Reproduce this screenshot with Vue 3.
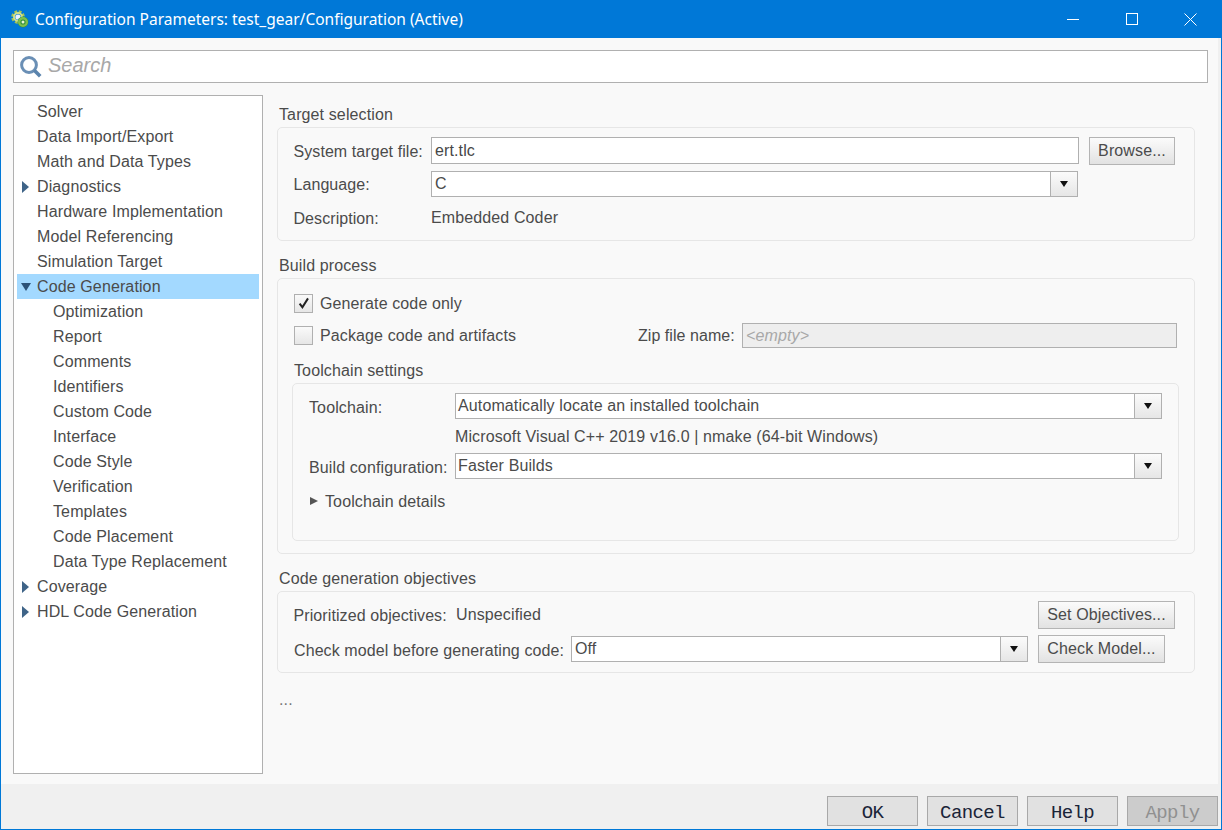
<script setup>
const tree = [
  { t: 'Solver', lvl: 0 },
  { t: 'Data Import/Export', lvl: 0 },
  { t: 'Math and Data Types', lvl: 0 },
  { t: 'Diagnostics', lvl: 0, arrow: 'right' },
  { t: 'Hardware Implementation', lvl: 0 },
  { t: 'Model Referencing', lvl: 0 },
  { t: 'Simulation Target', lvl: 0 },
  { t: 'Code Generation', lvl: 0, arrow: 'down', sel: true },
  { t: 'Optimization', lvl: 1 },
  { t: 'Report', lvl: 1 },
  { t: 'Comments', lvl: 1 },
  { t: 'Identifiers', lvl: 1 },
  { t: 'Custom Code', lvl: 1 },
  { t: 'Interface', lvl: 1 },
  { t: 'Code Style', lvl: 1 },
  { t: 'Verification', lvl: 1 },
  { t: 'Templates', lvl: 1 },
  { t: 'Code Placement', lvl: 1 },
  { t: 'Data Type Replacement', lvl: 1 },
  { t: 'Coverage', lvl: 0, arrow: 'right' },
  { t: 'HDL Code Generation', lvl: 0, arrow: 'right' },
]
</script>

<template>
  <div class="window">
    <header class="titlebar">
      <svg class="appicon" width="18" height="18" viewBox="0 0 18 18">
        <circle cx="7" cy="7" r="5.2" fill="none" stroke="#a5c455" stroke-width="3.2" stroke-dasharray="2.6 1.5"/>
        <circle cx="7" cy="7" r="4" fill="none" stroke="#cfe08e" stroke-width="2"/>
        <circle cx="7" cy="7" r="2.6" fill="#eaf2ff"/>
        <circle cx="12" cy="12" r="5.4" fill="#2f8f3a"/>
        <circle cx="12" cy="12" r="3.8" fill="none" stroke="#7ec04e" stroke-width="2.4"/>
        <circle cx="12" cy="12" r="1.5" fill="#e8f4d8"/>
      </svg>
      <span class="title">Configuration Parameters: test_gear/Configuration (Active)</span>
      <div class="winctl">
        <svg width="13" height="13" viewBox="0 0 13 13"><path d="M0 6.5h12" stroke="#fff" fill="none"/></svg>
        <svg width="13" height="13" viewBox="0 0 13 13"><rect x="0.5" y="0.5" width="11" height="11" stroke="#fff" fill="none"/></svg>
        <svg width="13" height="13" viewBox="0 0 13 13"><path d="M0.5 0.5l12 12M12.5 0.5l-12 12" stroke="#fff" fill="none"/></svg>
      </div>
    </header>

    <main class="main">
      <div class="search">
        <svg width="24" height="24" viewBox="0 0 24 24">
          <circle cx="10" cy="10" r="7.4" fill="none" stroke="#6a8fb5" stroke-width="3"/>
          <path d="M15.2 15.2l6 6" stroke="#5b84ad" stroke-width="3.6" fill="none"/>
        </svg>
        <span class="search-text">Search</span>
      </div>

      <div class="content">
        <nav class="tree">
          <div v-for="n in tree" :key="n.t" class="row" :class="{ sel: n.sel, sub: n.lvl === 1 }">
            <span class="twist">
              <i v-if="n.arrow === 'right'" class="tri-r"></i>
              <i v-if="n.arrow === 'down'" class="tri-d"></i>
            </span>
            <span>{{ n.t }}</span>
          </div>
        </nav>

        <section class="panel">
          <h3 class="sect">Target selection</h3>
          <div class="box b1">
            <div class="line l1">
              <label class="lab w1 down1">System target file:</label>
              <div class="field f-target">ert.tlc</div>
              <button class="btn browse">Browse...</button>
            </div>
            <div class="line l2">
              <label class="lab w1 down1">Language:</label>
              <div class="combo c-lang"><span class="cv">C</span><span class="carrow"><i></i></span></div>
            </div>
            <div class="line l3">
              <label class="lab w1 down1">Description:</label>
              <span class="lab">Embedded Coder</span>
            </div>
          </div>

          <h3 class="sect gap">Build process</h3>
          <div class="box b2">
            <div class="check-line">
              <span class="cb">
                <svg width="14" height="14" viewBox="0 0 14 14"><path d="M2.6 7.6l2.8 3.6L11 2.4" fill="none" stroke="#222" stroke-width="2"/></svg>
              </span>
              <span class="down1">Generate code only</span>
            </div>
            <div class="check-line second">
              <span class="cb"></span>
              <span class="pkg down1">Package code and artifacts</span>
              <span class="zip down1">Zip file name:</span>
              <div class="field disabled">&lt;empty&gt;</div>
            </div>
            <div class="inner-title">Toolchain settings</div>
            <div class="inner">
              <div class="line it1">
                <label class="lab w2 down2">Toolchain:</label>
                <div class="combo c-tool"><span class="cv tight">Automatically locate an installed toolchain</span><span class="carrow"><i></i></span></div>
              </div>
              <div class="note">Microsoft Visual C++ 2019 v16.0 | nmake (64-bit Windows)</div>
              <div class="line it2">
                <label class="lab w2 down2">Build configuration:</label>
                <div class="combo c-tool"><span class="cv tight">Faster Builds</span><span class="carrow"><i></i></span></div>
              </div>
              <div class="details"><i class="tri-g"></i><span class="down1">Toolchain details</span></div>
            </div>
          </div>

          <h3 class="sect gap">Code generation objectives</h3>
          <div class="box b3">
            <div class="line o1">
              <label class="lab prio down1">Prioritized objectives:</label>
              <span class="lab unspec">Unspecified</span>
              <button class="btn setobj">Set Objectives...</button>
            </div>
            <div class="line o2">
              <label class="lab chk down2">Check model before generating code:</label>
              <div class="combo c-off"><span class="cv">Off</span><span class="carrow"><i></i></span></div>
              <button class="btn chkmodel">Check Model...</button>
            </div>
          </div>
          <div class="dots">...</div>
        </section>
      </div>
    </main>

    <footer class="footer">
      <button class="fbtn">OK</button>
      <button class="fbtn">Cancel</button>
      <button class="fbtn">Help</button>
      <button class="fbtn off">Apply</button>
    </footer>
  </div>
</template>

<style>
html, body { margin: 0; padding: 0; }
</style>

<style scoped>
.window {
  width: 1222px; height: 830px; box-sizing: border-box;
  border: 1px solid #0078d7; border-top: 0;
  display: flex; flex-direction: column;
  background: #f0f0f0;
  font-family: "Liberation Sans", Arial, sans-serif;
  font-size: 16px; letter-spacing: 0.12px; color: #4b4b4b; overflow: hidden;
}
.titlebar {
  height: 38px; flex: none; background: #0078d7; color: #fff;
  display: flex; align-items: center; padding-left: 11px; margin: 0 -1px 0 -1px;
  letter-spacing: 0;
}
.appicon { margin-right: 6px; }
.title { font-family: "Noto Sans", sans-serif; font-size: 15.5px; white-space: nowrap; }
.winctl { margin-left: auto; display: flex; gap: 45.5px; padding-right: 25px; align-items: center; }

.main {
  flex: 1; min-height: 0; background: #f9f9f9; margin-right: 3px;
  padding: 12px 10px 0 12px;
}
.search {
  height: 33px; box-sizing: border-box; border: 1px solid #b0b0b0; background: #fff;
  display: flex; align-items: center; padding-left: 5px;
  font-style: italic; font-size: 20px; color: #a8a8a8; letter-spacing: 0;
}
.search svg { margin-right: 5px; }
.search-text { position: relative; top: -1px; }

.content { display: flex; margin-top: 12px; }
.tree {
  width: 250px; height: 679px; box-sizing: border-box; flex: none;
  border: 1px solid #b0b0b0; background: #fff; padding: 3px 3px 0 3px;
}
.row { height: 25px; display: flex; align-items: center; white-space: nowrap; width: 242px; }
.row.sel { background: #a3d9ff; }
.twist { width: 20px; flex: none; display: flex; justify-content: center; padding-right: 3px; box-sizing: border-box; }
.row.sub .twist { width: 36px; }
.tri-r { width: 0; height: 0; border-left: 7px solid #3f6488; border-top: 6px solid transparent; border-bottom: 6px solid transparent; }
.tri-d { width: 0; height: 0; border-top: 8px solid #2c5278; border-left: 5px solid transparent; border-right: 5px solid transparent; }

.panel { width: 918px; margin-left: 14px; padding-top: 9px; flex: none; }
.sect { font-size: 16px; font-weight: normal; height: 20px; line-height: 22px; margin: 0 0 3px 2px; }
.sect.gap { margin-top: 14px; }
.box { border: 1px solid #e6e6e6; border-radius: 5px; box-sizing: border-box; padding: 0 16px; }
.b1 { height: 114px; padding-top: 9px; }
.b2 { height: 276px; padding-top: 14px; }
.b3 { height: 82px; padding-top: 9px; }

.line { display: flex; align-items: center; }
.lab { white-space: nowrap; }
.down1 { padding-top: 2px; }
.down2 { padding-top: 4px; }
.w1 { width: 137.5px; flex: none; margin-left: -0.5px; letter-spacing: 0.07px; }
.l1 { height: 28px; }
.l2 { height: 26px; margin-top: 6px; }
.l3 { height: 26px; margin-top: 8px; }

.field {
  height: 27px; line-height: 25px; box-sizing: border-box; border: 1px solid #b0b0b0; background: #fff;
  padding-left: 3px; color: #474747;
}
.f-target { width: 648px; align-self: flex-start; }
.btn {
  height: 28px; box-sizing: border-box; padding: 0; font: inherit; letter-spacing: inherit; color: #4b4b4b;
  border: 1px solid #b4b4b4; background: linear-gradient(#fbfbfb, #e2e2e2);
}
.browse { width: 86px; margin-left: 10px; }

.combo { height: 26px; box-sizing: border-box; border: 1px solid #b0b0b0; background: #fff; display: flex; }
.cv { flex: 1; padding-left: 3px; line-height: 23px; white-space: nowrap; }
.cv.tight { padding-left: 2px; }
.carrow {
  width: 27px; flex: none; border-left: 1px solid #b0b0b0; box-sizing: border-box;
  background: linear-gradient(#fbfbfb, #e6e6e6);
  display: flex; align-items: center; justify-content: center;
}
.carrow i { width: 0; height: 0; border-top: 6px solid #111; border-left: 4.5px solid transparent; border-right: 4.5px solid transparent; }
.c-lang { width: 647px; }
.c-tool { width: 707px; }
.c-off { width: 457px; }

.check-line { display: flex; align-items: center; height: 20px; }
.check-line.second { margin-top: 12px; height: 20px; }
.cb {
  width: 19px; height: 19px; box-sizing: border-box; border: 1px solid #b0b0b0; flex: none;
  background: linear-gradient(#fafafa, #e6e6e6); margin-right: 7px;
  display: flex; align-items: center; justify-content: center;
}
.pkg { width: 318px; flex: none; }
.zip { width: 104px; flex: none; letter-spacing: 0.05px; }
.field.disabled {
  width: 435px; height: 25px; line-height: 23px; background: #eeeeee; color: #a8a8a8; font-style: italic;
}
.inner-title { margin-top: 15px; margin-left: 0; height: 20px; line-height: 22px; }
.inner {
  margin-top: 3px; margin-left: -2px; width: 887px; height: 158px; box-sizing: border-box;
  border: 1px solid #e6e6e6; border-radius: 5px; padding: 9px 16px 0 16px;
}
.w2 { width: 146px; flex: none; }
.note { margin-left: 146px; height: 20px; line-height: 22px; margin-top: 7px; }
.it2 { margin-top: 7px; }
.details { display: flex; align-items: center; margin: 12px 0 0 1px; height: 20px; }
.tri-g { width: 0; height: 0; border-left: 8px solid #555; border-top: 4.5px solid transparent; border-bottom: 4.5px solid transparent; margin-right: 7px; }

.o1 { height: 28px; }
.prio { width: 162px; flex: none; margin-left: -0.5px; letter-spacing: 0.09px; }
.unspec { flex: 1; margin-left: 0.5px; }
.setobj { width: 137px; margin-right: 3px; }
.o2 { height: 28px; margin-top: 6px; }
.chk { width: 277px; flex: none; margin-right: 0; letter-spacing: 0.09px; }
.chkmodel { width: 127px; margin-left: 10px; }
.dots { margin: 17px 0 0 2px; height: 20px; line-height: 20px; color: #777; }

.footer {
  height: 45px; flex: none; display: flex; justify-content: flex-end; gap: 9px;
  padding: 12px 3px 3px 0; box-sizing: border-box;
}
.fbtn {
  width: 91px; height: 30px; box-sizing: border-box; padding: 3px 0 0;
  border: 1px solid #a8a8a8; background: #e1e1e1; color: #1a2438;
  font-family: "Liberation Mono", monospace; font-size: 19px; letter-spacing: -0.6px;
}
.fbtn.off { background: #cccccc; color: #909090; }
</style>
